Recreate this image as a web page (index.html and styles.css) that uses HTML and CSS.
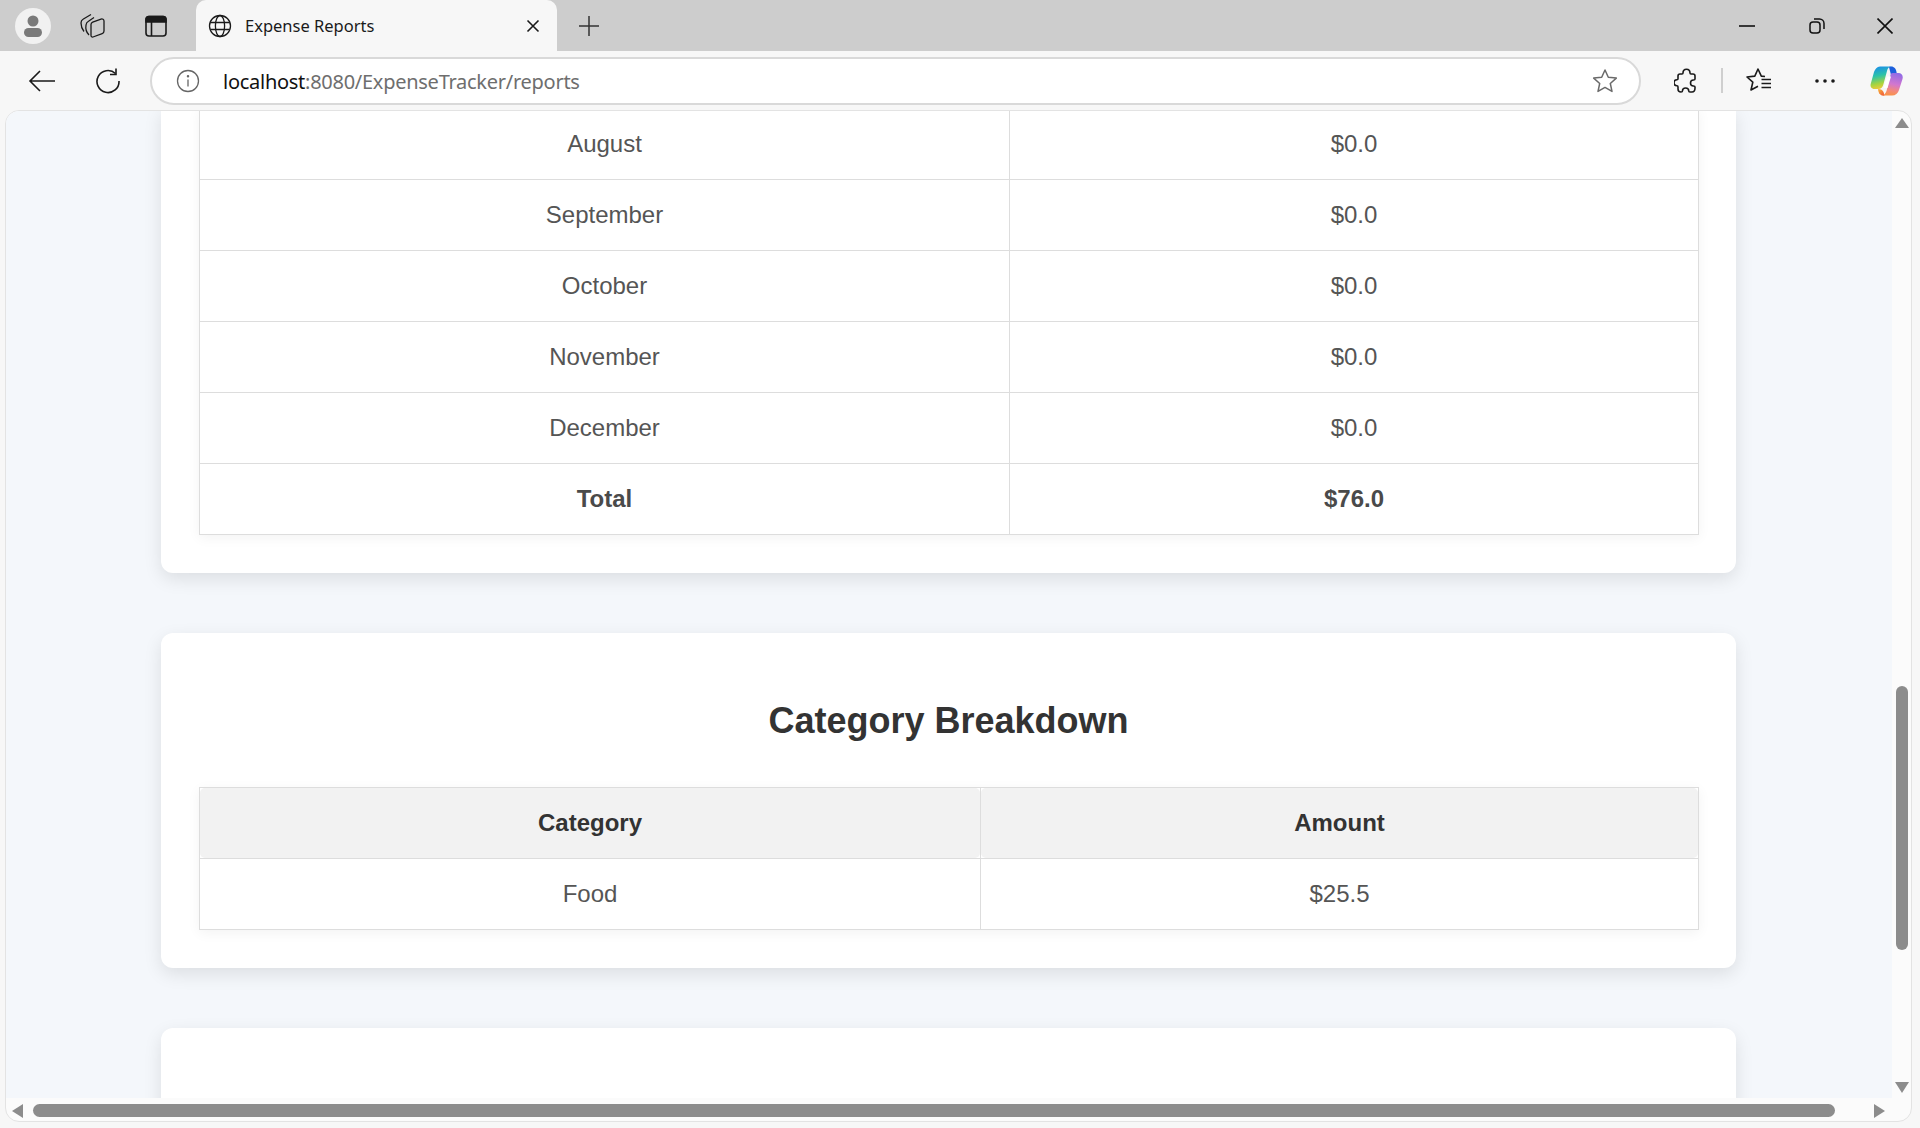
FILE: index.html
```html
<!DOCTYPE html>
<html lang="en">
<head>
  <meta charset="UTF-8" />
  <title>Expense Reports</title>
  <link rel="stylesheet" href="styles.css">
</head>
<body>

  <!-- browser tabs -->
  <div class="tabstrip">
    <div class="avatar">
      <svg width="36" height="36" viewBox="0 0 36 36"><circle cx="18" cy="18" r="18" fill="#f1f1f1"/><circle cx="18" cy="13" r="5.500" fill="#7a7a7a"/><rect x="9" y="20" width="18" height="9" rx="4.500" fill="#7a7a7a"/></svg>
    </div>
    <div class="strip-icon first">
      <svg width="25" height="25" viewBox="0 0 25 25" fill="none" stroke="#1a1a1a" stroke-width="1.300" stroke-linejoin="round"><path d="M4 18.500C2 16 1 13 1 10c0-2 .5-3 2-3.800L11 1.500"/><path d="M9 22C6.500 19.500 5.500 15 6 12c.2-2 1-3 2.500-3.800L14 4.500"/><path d="M13 24c-1 .3-2-.3-2-1.400V11.500c0-1.300.6-2 1.700-2.400l8.300-3c1.500-.5 3 .3 3 2V18c0 1.300-.6 2.200-1.800 2.600z"/></svg>
    </div>
    <div class="strip-icon second">
      <svg width="22" height="22" viewBox="0 0 22 22" fill="none" stroke="#1a1a1a" stroke-width="1.600"><rect x="1" y="1.500" width="20" height="19.500" rx="3"/><path d="M1 4.500a3 3 0 0 1 3-3h14a3 3 0 0 1 3 3V7H1z" fill="#1a1a1a"/><path d="M6.500 7v14"/></svg>
    </div>
    <div class="tab">
      <svg class="tab-globe" width="24" height="24" viewBox="0 0 24 24" fill="none" stroke="#1a1a1a" stroke-width="1.300"><circle cx="12" cy="12" r="10.500"/><ellipse cx="12" cy="12" rx="4.600" ry="10.500"/><path d="M2.300 8.500h19.400M2.300 15.500h19.400"/></svg>
      <span class="tab-title">Expense Reports</span>
      <svg class="tab-close" width="14" height="14" viewBox="0 0 14 14" stroke="#1a1a1a" stroke-width="1.600"><path d="M1.500 1.500l11 11M12.500 1.500l-11 11"/></svg>
    </div>
    <svg class="new-tab" width="22" height="22" viewBox="0 0 22 22" stroke="#333" stroke-width="1.500"><path d="M11 1v20M1 11h20"/></svg>
    <div class="window-btns">
      <svg width="16" height="16" viewBox="0 0 16 16" stroke="#111" stroke-width="1.600"><path d="M0 8h16"/></svg>
      <svg class="restore" width="16" height="16" viewBox="0 0 16 16" fill="none" stroke="#111" stroke-width="1.500"><rect x="1" y="4" width="10" height="11" rx="3"/><path d="M5 1h5.500A4.500 4.500 0 0 1 15 5.500V11"/></svg>
      <svg width="16" height="16" viewBox="0 0 16 16" stroke="#111" stroke-width="1.600"><path d="M.5.500l15 15M15.500.500l-15 15"/></svg>
    </div>
  </div>

  <!-- address bar -->
  <div class="toolbar">
    <svg class="tool-back" width="28" height="24" viewBox="0 0 28 24" fill="none" stroke="#1a1a1a" stroke-width="1.600"><path d="M27 12H2M12 2 2 12l10 10"/></svg>
    <svg class="tool-reload" width="26" height="26" viewBox="0 0 26 26" fill="none" stroke="#1a1a1a" stroke-width="1.600"><path d="M20.500 5.500A11 11 0 1 0 24 13"/><path d="M21 .5v6h-6"/></svg>
    <div class="address">
      <svg class="addr-info" width="24" height="24" viewBox="0 0 24 24" fill="none" stroke="#666" stroke-width="1.300"><circle cx="12" cy="12" r="10.500"/><path d="M12 10.500v7"/><circle cx="12" cy="7.300" r=".6" fill="#666"/></svg>
      <span class="url"><span class="url-host">localhost</span>:8080/ExpenseTracker/reports</span>
      <svg class="addr-star" width="26" height="26" viewBox="0 0 26 26" fill="none" stroke="#6a6a6a" stroke-width="1.500" stroke-linejoin="round"><path d="M13 2l3.300 7.300 8 .8-6 5.400 1.700 7.900-7-4-7 4 1.700-7.900-6-5.400 8-.8z"/></svg>
    </div>
    <svg class="tool-ext" width="24" height="26" viewBox="0 0 24 26" fill="none" stroke="#1a1a1a" stroke-width="1.600" stroke-linejoin="round"><path d="M9 5c0-5 7-5 7 0 0 .8 0 1 1 1h2c1.500 0 2 1 2 2v3c0 1-.6 1-1.500 1-4 0-4 6 0 6 1 0 1.500.2 1.500 1v1c0 2-1 4-3 4h-2c-1 0-1.300-.5-1.300-1.300 0-3.700-6.200-3.700-6.200 0 0 .8-.5 1.300-1.500 1.300-2 0-3-1.500-3-3v-2c0-1-.3-1.300-1-1.300-4 0-4-6 0-6 .7 0 1-.3 1-1V8c0-1.500 1-2 2-2h2c1 0 1-.2 1-1z"/></svg>
    <span class="tool-sep"></span>
    <svg class="tool-fav" width="26" height="26" viewBox="0 0 26 26" fill="none" stroke="#1a1a1a" stroke-width="1.600" stroke-linejoin="round"><path d="M19 8.500l-3.700-.4L12 1 8.800 8.100 1 9l5.800 5.200L5 22l7-3.800"/><path d="M15.500 11.500H25M15.500 15.500H25M15.500 19.500H25"/></svg>
    <svg class="tool-more" width="20" height="4" viewBox="0 0 20 4" fill="#1a1a1a"><circle cx="2" cy="2" r="1.800"/><circle cx="10" cy="2" r="1.800"/><circle cx="18" cy="2" r="1.800"/></svg>
    <svg class="tool-copilot" width="33" height="30" viewBox="0 0 33 30">
      <defs>
        <linearGradient id="cpLeft" x1=".3" y1="0" x2=".5" y2="1"><stop offset="0" stop-color="#1a8fe8"/><stop offset=".4" stop-color="#2cc3a8"/><stop offset=".75" stop-color="#a6d440"/><stop offset="1" stop-color="#f5c93c"/></linearGradient>
        <linearGradient id="cpRight" x1=".7" y1="0" x2=".5" y2="1"><stop offset="0" stop-color="#8f6be6"/><stop offset=".5" stop-color="#d277cf"/><stop offset=".8" stop-color="#f48a78"/><stop offset="1" stop-color="#f9924a"/></linearGradient>
        <linearGradient id="cpTail" x1="0" y1="0" x2="1" y2="1"><stop offset="0" stop-color="#f7b93c"/><stop offset="1" stop-color="#ef4f3a"/></linearGradient>
      </defs>
      <path d="M19 1c4-1.500 7 1 7.500 5l.5 3h-6z" fill="#1c5fdc"/>
      <path d="M8 23c3 0 4.500 1 5.500 3l1 3.500c-3 .8-6-1-6.500-6.500z" fill="url(#cpTail)"/>
      <path d="M10 .5H22C19 .5 17.500 2.500 17 5L13.500 18C13 21 11 23 8 23H4.500C1.500 23 0 20.500 .7 18L4 6C5 3 7 .5 10 .5z" fill="url(#cpLeft)"/>
      <path d="M22.500 7H28.500C31.500 7 33.500 9.500 32.500 13L29 24C28 27.500 25.500 29.500 22 29.500H11C14 29.500 15.500 27.500 16.500 25L20 11C20.500 8.500 21 7 22.500 7z" fill="url(#cpRight)"/>
      <path d="M17 10.500h4l-3.500 11.500h-4z" fill="#fff"/>
    </svg>
  </div>

  <div class="window">
    <div class="viewport">
      <div class="container">

        <div class="card first-card">
          <table class="report monthly">
            <tbody>
              <tr><td>August</td><td>$0.0</td></tr>
              <tr><td>September</td><td>$0.0</td></tr>
              <tr><td>October</td><td>$0.0</td></tr>
              <tr><td>November</td><td>$0.0</td></tr>
              <tr><td>December</td><td>$0.0</td></tr>
              <tr class="total"><td>Total</td><td>$76.0</td></tr>
            </tbody>
          </table>
        </div>

        <div class="card">
          <h2>Category Breakdown</h2>
          <table class="report category">
            <thead>
              <tr><th><div class="th-fill">Category</div></th><th><div class="th-fill">Amount</div></th></tr>
            </thead>
            <tbody>
              <tr><td>Food</td><td>$25.5</td></tr>
            </tbody>
          </table>
        </div>

        <div class="card"></div>

      </div>
    </div>

    <div class="vbar">
      <span class="arrow arrow-up"></span>
      <span class="vthumb"></span>
      <span class="arrow arrow-down"></span>
    </div>
    <div class="hbar">
      <span class="arrow arrow-left"></span>
      <span class="hthumb"></span>
      <span class="arrow arrow-right"></span>
    </div>
    <div class="corner"></div>
  </div>

</body>
</html>
```

FILE: styles.css
```css
* {
  box-sizing: border-box;
}
html, body {
  height: 100%;
}
body {
  margin: 0;
  display: flex;
  flex-direction: column;
  overflow: hidden;
  background: #f7f7f7;
  font-family: "Liberation Sans", Arial, sans-serif;
  color: #555;
}

/* tab strip */
.tabstrip {
  height: 51px;
  flex: none;
  display: flex;
  align-items: center;
  background: #cdcdcd;
}
.avatar {
  margin-left: 15px;
  display: flex;
}
.strip-icon {
  display: flex;
}
.strip-icon.first {
  margin-left: 29px;
}
.strip-icon.second {
  margin-left: 40px;
}
.tab {
  margin-left: 29px;
  width: 361px;
  height: 51px;
  display: flex;
  align-items: center;
  background: #f7f7f7;
  border-radius: 10px 10px 0 0;
}
.tab-globe {
  margin-left: 12px;
}
.tab-title {
  margin-left: 13px;
  font-family: "Noto Sans", sans-serif;
  font-size: 16.500px;
  color: #1a1a1a;
  flex: 1;
}
.tab-close {
  margin-right: 17px;
}
.new-tab {
  margin-left: 21px;
}
.window-btns {
  margin-left: auto;
  margin-right: 27px;
  display: flex;
  gap: 53px;
}
.restore {
  position: relative;
  left: 1px;
}

/* toolbar */
.toolbar {
  height: 59px;
  flex: none;
  display: flex;
  align-items: center;
}
.tool-back {
  margin-left: 28px;
}
.tool-reload {
  margin-left: 39px;
}
.address {
  margin-left: 29px;
  width: 1491px;
  height: 48px;
  display: flex;
  align-items: center;
  background: #fff;
  border: 2px solid #d9d9d9;
  border-radius: 24px;
}
.addr-info {
  margin-left: 24px;
}
.url {
  margin-left: 23px;
  padding-top: 2px;
  font-family: "Noto Sans", sans-serif;
  font-size: 20px;
  letter-spacing: -.27px;
  color: #6e6e6e;
  flex: 1;
}
.url-host {
  color: #111;
}
.addr-star {
  margin-right: 21px;
}
.tool-ext {
  margin-left: 33px;
}
.tool-sep {
  margin-left: 23px;
  width: 2px;
  height: 25px;
  background: #cfcfcf;
}
.tool-fav {
  margin-left: 23px;
}
.tool-more {
  margin-left: 43px;
}
.tool-copilot {
  margin-left: 35px;
}

/* page area */
.window {
  flex: 1;
  min-height: 0;
  margin: 0 8px 6px 5px;
  display: grid;
  grid-template-columns: 1fr 19px;
  grid-template-rows: 1fr 23px;
  background: #fbfbfb;
  border: 1px solid #e3e3e3;
  border-radius: 14px;
  overflow: hidden;
}
.viewport {
  overflow: hidden;
  background: #f4f7fb;
}
.container {
  margin: -3px 0 0 155px;
  width: 1575px;
}
.card {
  background: #fff;
  padding: 38px;
  margin-bottom: 60px;
  border-radius: 12px;
  box-shadow: 0 6px 18px rgba(0, 0, 0, .1);
  height: auto;
}
.first-card {
  padding-top: 0;
  border-radius: 0 0 12px 12px;
}
.card:last-child {
  height: 120px;
  margin-bottom: 0;
}
h2 {
  margin: 29px 0 46px;
  font-size: 36px;
  line-height: 41px;
  color: #333;
  text-align: center;
  font-weight: bold;
}

/* tables */
.report {
  width: 1500px;
  table-layout: fixed;
  border-collapse: separate;
  border-spacing: 0;
  border-left: 1.500px solid #ddd;
  border-top: 1.500px solid #ddd;
  box-shadow: 0 3px 12px rgba(0, 0, 0, .05);
  font-size: 24px;
  text-align: center;
}
.report td, .report th {
  padding: 0;
  height: 71px;
  border-right: 1.500px solid #ddd;
  border-bottom: 1.500px solid #ddd;
}
.th-fill {
  height: 100%;
  min-height: 69px;
  line-height: 69px;
  background: #f2f2f2;
  border-radius: 5px;
  color: #333;
}
.monthly td:first-child {
  width: 810px;
}
.category th:first-child {
  width: 781px;
}
.total td {
  font-weight: bold;
  color: #4a4a4a;
}

/* scrollbars */
.vbar {
  grid-column: 2;
  grid-row: 1;
  display: flex;
  flex-direction: column;
  align-items: center;
  padding: 7px 0 5px;
}
.vthumb {
  margin-top: 558px;
  width: 12px;
  height: 264px;
  background: #8c8c8c;
  border-radius: 6px;
}
.hbar {
  grid-column: 1;
  grid-row: 2;
  display: flex;
  align-items: center;
  padding: 2px 0 0 6px;
}
.hthumb {
  margin-left: 10px;
  width: 1802px;
  height: 13px;
  background: #8c8c8c;
  border-radius: 7px;
}
.arrow {
  width: 0;
  height: 0;
  flex: none;
  border-style: solid;
  border-color: transparent;
}
.arrow-up {
  border-width: 0 7.500px 10px;
  border-bottom-color: #8c8c8c;
}
.arrow-down {
  margin-top: auto;
  border-width: 11px 7.500px 0;
  border-top-color: #8c8c8c;
}
.arrow-left {
  border-width: 7px 11px 7px 0;
  border-right-color: #8c8c8c;
}
.arrow-right {
  margin-left: 39px;
  border-width: 7px 0 7px 11px;
  border-left-color: #8c8c8c;
}
```
